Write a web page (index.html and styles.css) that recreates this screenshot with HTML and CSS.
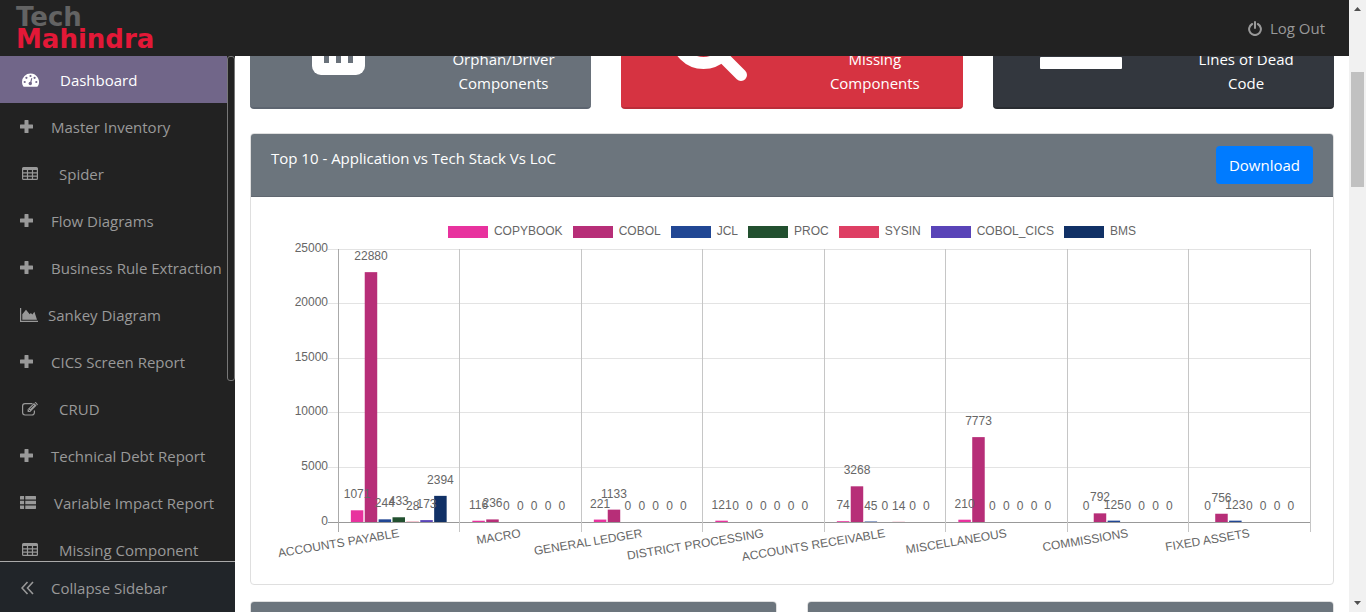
FILE: index.html
```html
<!DOCTYPE html>
<html lang="en">
<head>
<meta charset="utf-8">
<title>Dashboard</title>
<link rel="stylesheet" href="styles.css">
</head>
<body>
<svg class="sprite" aria-hidden="true">
  <symbol id="plus" viewBox="0 0 13 13"><path d="M5 0h3q.5 0 .5.500V4.500h4q.5 0 .5.500v3q0 .5-.5.500h-4v4q0 .5-.5.500H5q-.5 0-.5-.500v-4h-4q-.5 0-.5-.500V5q0-.5.500-.500h4v-4q0-.5.500-.500z"/></symbol>
  <symbol id="table" viewBox="0 0 16 13"><path fill-rule="evenodd" d="M1.500 0h13A1.500 1.500 0 0 1 16 1.500v10a1.500 1.500 0 0 1-1.500 1.500h-13A1.500 1.500 0 0 1 0 11.500v-10A1.500 1.500 0 0 1 1.500 0zM1.200 3v2.300h3.700V3zm4.900 0v2.300h3.800V3zm5 0v2.300h3.700V3zM1.200 6.400v2.200h3.700V6.400zm4.900 0v2.200h3.800V6.400zm5 0v2.200h3.700V6.400zM1.200 9.700v2.100h3.700V9.700zm4.900 0v2.100h3.800V9.700zm5 0v2.100h3.700V9.700z"/></symbol>
</svg>
<div class="page">
  <header class="topbar">
    <a class="logo" href="#"><span>Tech</span><span class="logo-red">Mahindra</span></a>
    <a class="logout" href="#">
      <svg width="14" height="15" viewBox="0 0 14 15" fill="none" stroke="currentColor" stroke-width="2" stroke-linecap="round"><path d="M4.200 3A5.900 5.900 0 1 0 9.800 3M7 1v6"/></svg>
      Log Out
    </a>
  </header>

  <aside class="sidebar">
    <div class="menu">
      <nav class="menu-list">
        <a class="item indent active" href="#"><svg width="17" height="14" viewBox="0 0 17 14"><path fill="currentColor" d="M8.500.5A8.500 8.500 0 0 0 0 9c0 1.500.4 3 1.200 4.300.2.300.4.4.7.4h13.200c.3 0 .5-.1.7-.4A8.500 8.500 0 0 0 8.500.5z"/><g fill="#716689"><circle cx="2.700" cy="9" r="1.100"/><circle cx="4.400" cy="4.800" r="1.100"/><circle cx="8.500" cy="3" r="1.100"/><circle cx="12.600" cy="4.800" r="1.100"/><circle cx="14.300" cy="9" r="1.100"/><circle cx="8.300" cy="10.500" r="1.700"/><path d="M9.300 4.900l1 .3-1.100 5-1.200-.3z"/></g></svg>Dashboard</a>
        <a class="item" href="#"><svg width="13" height="13"><use href="#plus"/></svg>Master Inventory</a>
        <a class="item indent" href="#"><svg width="16" height="13"><use href="#table"/></svg>Spider</a>
        <a class="item" href="#"><svg width="13" height="13"><use href="#plus"/></svg>Flow Diagrams</a>
        <a class="item" href="#"><svg width="13" height="13"><use href="#plus"/></svg>Business Rule Extraction</a>
        <a class="item near" href="#"><svg width="18" height="14" viewBox="0 0 18 14"><path d="M0 0h1.200v12.800H18V14H0zM2.300 11.800V6.300L6 1.800l3.700 4.400 1.200-1.200 1.500 1.400 2-2.600 2.600 8z"/></svg>Sankey Diagram</a>
        <a class="item" href="#"><svg width="13" height="13"><use href="#plus"/></svg>CICS Screen Report</a>
        <a class="item indent" href="#"><svg width="16" height="14" viewBox="0 0 16 14"><path fill="none" stroke="currentColor" stroke-width="1.200" d="M10.500 1.600H3A2.400 2.400 0 0 0 .6 4v6.600A2.400 2.400 0 0 0 3 13h7a2.400 2.400 0 0 0 2.400-2.400V8.500"/><path d="M5.600 7.300L12 .9l2.600 2.600-6.400 6.400H5.600zM12.700.3l.5-.2c.3-.1.500 0 .8.200l1.600 1.600c.3.300.3.700 0 1l-.5.400z"/><path d="M6.600 7.600l1.400 1.400M8 6.900l4-4" stroke="#222" stroke-width=".8"/></svg>CRUD</a>
        <a class="item" href="#"><svg width="13" height="13"><use href="#plus"/></svg>Technical Debt Report</a>
        <a class="item" href="#"><svg width="16" height="13" viewBox="0 0 16 13"><path d="M.5 0h3.600v3.400H0V.5zM5.300 0h10.200l.5.500v2.900H5.300zM0 4.800h4.100v3.400H0zM5.300 4.800H16v3.400H5.300zM0 9.600h4.100V13H.5l-.5-.5zM5.300 9.600H16v2.900l-.5.500H5.300z"/></svg>Variable Impact Report</a>
        <a class="item indent" href="#"><svg width="16" height="13"><use href="#table"/></svg>Missing Component</a>
      </nav>
      <div class="menu-track"><div class="menu-thumb"></div></div>
    </div>
    <button class="collapse" type="button"><svg width="13" height="14" viewBox="0 0 13 14"><path fill="none" stroke="currentColor" stroke-width="1.600" d="M6.500 1l-5.500 6 5.500 6M12 1L6.500 7l5.500 6"/></svg>Collapse Sidebar</button>
  </aside>

  <main class="content">
    <section class="tiles">
      <a class="tile tile-grey" href="#">
        <svg width="100" height="100" viewBox="0 0 100 100"><rect x="24" y="20" width="53" height="59" rx="9" fill="#fff"/><path d="M36 40h5v27h-5zM48 40h5v27h-5zM60 40h5v27h-5z" fill="#69717a"/></svg>
        <span>Orphan/Driver<br>Components</span>
      </a>
      <a class="tile tile-red" href="#">
        <svg width="100" height="100" viewBox="0 0 100 100" fill="none" stroke="#fff" stroke-width="12" stroke-linecap="round"><circle cx="44.500" cy="40.500" r="26.500"/><path d="M64 61l18 18"/></svg>
        <span>Missing<br>Components</span>
      </a>
      <a class="tile tile-dark" href="#">
        <svg width="100" height="100" viewBox="0 0 100 100" fill="#fff"><rect x="10" y="19" width="82" height="12" rx="1"/><rect x="10" y="40" width="82" height="12" rx="1"/><rect x="10" y="61" width="82" height="12" rx="1"/></svg>
        <span>Lines of Dead<br>Code</span>
      </a>
    </section>

    <section class="card">
      <div class="card-head">
        <span>Top 10 - Application vs Tech Stack Vs LoC</span>
        <button class="download" type="button">Download</button>
      </div>
      <div class="card-body">
        <ul class="legend" id="legend"></ul>
        <svg class="chart" id="chart" viewBox="0 0 1042 326" role="img" aria-label="Lines of code by application and tech stack"></svg>
      </div>
    </section>

    <section class="next-row">
      <div class="card"><div class="card-head"></div></div>
      <div class="card"><div class="card-head"></div></div>
    </section>
  </main>

  <div class="scrollbar" aria-hidden="true">
    <svg width="17" height="16" viewBox="0 0 17 16"><path d="M5 11l3.500-4 3.500 4z" fill="#505050"/></svg>
    <div class="scroll-space"><div class="scroll-thumb"></div></div>
    <svg width="17" height="16" viewBox="0 0 17 16"><path d="M5 5l3.500 4L12 5z" fill="#505050"/></svg>
  </div>
</div>
<script src="chart.js"></script>
</body>
</html>
```
FILE: styles.css
```css
* { box-sizing: border-box; }

body {
  margin: 0;
  background: #fff;
  color: #212529;
  font-family: "Open Sans", "Noto Sans", sans-serif;
  font-size: 15px;
  line-height: 24px;
}

a { color: inherit; text-decoration: none; }
button { font: inherit; border: 0; cursor: pointer; }
.sprite { display: none; }

.page {
  display: grid;
  grid-template-columns: 235px minmax(0, 1fr) 17px;
  grid-template-rows: 56px minmax(0, 1fr);
  height: 100vh;
  overflow: hidden;
}

.topbar {
  grid-column: 1 / 3;
  display: flex;
  align-items: center;
  justify-content: space-between;
  padding: 0 24px 0 16px;
  background: #222;
  color: #999;
}

.logo {
  display: flex;
  flex-direction: column;
  color: #636363;
  font: bold 26px/22px "DejaVu Sans", sans-serif;
}
.logo-red { color: #e31837; }

.logout { display: flex; align-items: center; gap: 8px; }

.sidebar {
  grid-column: 1;
  grid-row: 2;
  display: flex;
  flex-direction: column;
  min-height: 0;
  background: #222;
  color: #999;
}

.menu { flex: 1; display: flex; min-height: 0; overflow: hidden; }
.menu-list { flex: 1; min-width: 0; }

.item {
  display: flex;
  align-items: center;
  gap: 18px;
  height: 47px;
  padding-left: 20px;
  white-space: nowrap;
}
.item svg { flex: none; fill: currentColor; }
.indent { gap: 21px; padding-left: 22px; }
.near { gap: 10px; }
.active { background: #716689; color: #fff; }

.menu-track { width: 8px; }
.menu-thumb {
  height: 325px;
  border: 1px solid #777;
  border-radius: 3px;
  background: #222;
}

.collapse {
  display: flex;
  align-items: center;
  gap: 17px;
  height: 51px;
  padding: 2px 0 0 21px;
  border-top: 1px solid #aaa;
  background: #212529;
  color: #999;
}

.content {
  grid-column: 2;
  grid-row: 2;
  min-width: 0;
  overflow: hidden;
  padding: 0 15px;
}

.tiles {
  display: flex;
  align-items: flex-end;
  gap: 30px;
  height: 53px;
  margin-bottom: 24px;
  overflow: hidden;
}
.tile {
  flex: 1;
  display: grid;
  grid-template-columns: 1fr 1fr;
  align-items: end;
  justify-items: center;
  padding: 10px 5px 11px;
  border-radius: 4px;
  color: #fff;
  text-align: center;
}
.tile span { padding-bottom: 1px; }
.tile-grey { background: #69717a; border-bottom: 2px solid #5d6570; }
.tile-red { background: #d63341; border-bottom: 2px solid #bb2d39; }
.tile-dark { background: #33373e; border-bottom: 2px solid #292c31; }

.card {
  border: 1px solid #dfdfdf;
  border-radius: 4px;
  overflow: hidden;
  background: #fff;
}
.card-head {
  display: flex;
  align-items: flex-start;
  justify-content: space-between;
  min-height: 63px;
  padding: 12px 20px;
  border-bottom: 1px solid #606770;
  background: #6c757d;
  color: #fff;
}
.download {
  padding: 7px 13px;
  border-radius: 4px;
  background: #007bff;
  color: #fff;
}
.card-body { padding: 20px 20px 19px; }

.legend {
  display: flex;
  flex-wrap: wrap;
  justify-content: center;
  gap: 10px;
  margin: 0;
  padding: 7px 0 0;
  list-style: none;
  color: #666;
  font: 12px/15px "Liberation Sans", Arial, sans-serif;
}
.legend li { display: flex; align-items: center; gap: 6px; }
.swatch { width: 40px; height: 12px; }

.chart {
  display: block;
  width: 100%;
  font: 12px "Liberation Sans", Arial, sans-serif;
  fill: #666;
}

.next-row {
  display: grid;
  grid-template-columns: 1fr 1fr;
  gap: 30px;
  margin-top: 16px;
}

.scrollbar {
  grid-column: 3;
  grid-row: 1 / 3;
  display: flex;
  flex-direction: column;
  background: #f1f1f1;
}
.scroll-space { flex: 1; padding: 56px 2px 0; }
.scroll-thumb { height: 115px; background: #c1c1c1; }
```
FILE: chart.js
```js
const series = [
  ['COPYBOOK', '#e8329e'],
  ['COBOL', '#b72e78'],
  ['JCL', '#214794'],
  ['PROC', '#22502f'],
  ['SYSIN', '#de3f64'],
  ['COBOL_CICS', '#5944b8'],
  ['BMS', '#113166']
];

const rows = [
  ['ACCOUNTS PAYABLE', [1071, 22880, 244, 433, 28, 173, 2394]],
  ['MACRO', [116, 236, 0, 0, 0, 0, 0]],
  ['GENERAL LEDGER', [221, 1133, 0, 0, 0, 0, 0]],
  ['DISTRICT PROCESSING', [121, 0, 0, 0, 0, 0, 0]],
  ['ACCOUNTS RECEIVABLE', [74, 3268, 45, 0, 14, 0, 0]],
  ['MISCELLANEOUS', [210, 7773, 0, 0, 0, 0, 0]],
  ['COMMISSIONS', [0, 792, 125, 0, 0, 0, 0]],
  ['FIXED ASSETS', [0, 756, 123, 0, 0, 0, 0]]
];

const plot = { left: 67, right: 1039, top: 10, bottom: 283, max: 25000 };
const category = (plot.right - plot.left) / rows.length;
const slot = category * 0.8 / series.length;
const bar = slot * 0.9;
const yOf = value => plot.bottom - value / plot.max * (plot.bottom - plot.top);
const crisp = n => Math.floor(n) + 0.5;

const line = (x1, y1, x2, y2, colour) =>
  `<path d="M${x1} ${y1}L${x2} ${y2}" stroke="${colour}"/>`;

let grid = '';
let bars = '';
let labels = '';

for (let value = 0; value <= plot.max; value += 5000) {
  const y = crisp(yOf(value));
  grid += line(plot.left - 10, y, plot.right, y, value ? '#e3e3e3' : '#999');
  labels += `<text x="${plot.left - 10}" y="${Math.floor(y + 3)}" text-anchor="end">${value}</text>`;
}

for (let i = 0; i <= rows.length; i++) {
  const x = crisp(plot.left + i * category);
  grid += line(x, plot.top, x, plot.bottom + 10, i ? '#c6c6c6' : '#aaa');
}

rows.forEach(([name, values], i) => {
  const start = plot.left + i * category;
  values.forEach((value, k) => {
    const centre = start + category * 0.1 + slot * (k + 0.5);
    const y = yOf(value);
    if (value) {
      bars += `<rect x="${centre - bar / 2}" y="${y}" width="${bar}" height="${plot.bottom - y}" fill="${series[k][1]}"/>`;
    }
    labels += `<text x="${centre}" y="${Math.round(y - 12)}" text-anchor="middle">${value}</text>`;
  });
  const middle = start + category / 2 + 1;
  labels += `<text transform="translate(${middle} 298) rotate(-9.5)" text-anchor="end">${name}</text>`;
});

document.getElementById('chart').innerHTML = grid + bars + labels;
document.getElementById('legend').innerHTML = series.map(([name, colour]) =>
  `<li><span class="swatch" style="background:${colour}"></span>${name}</li>`).join('');
```
